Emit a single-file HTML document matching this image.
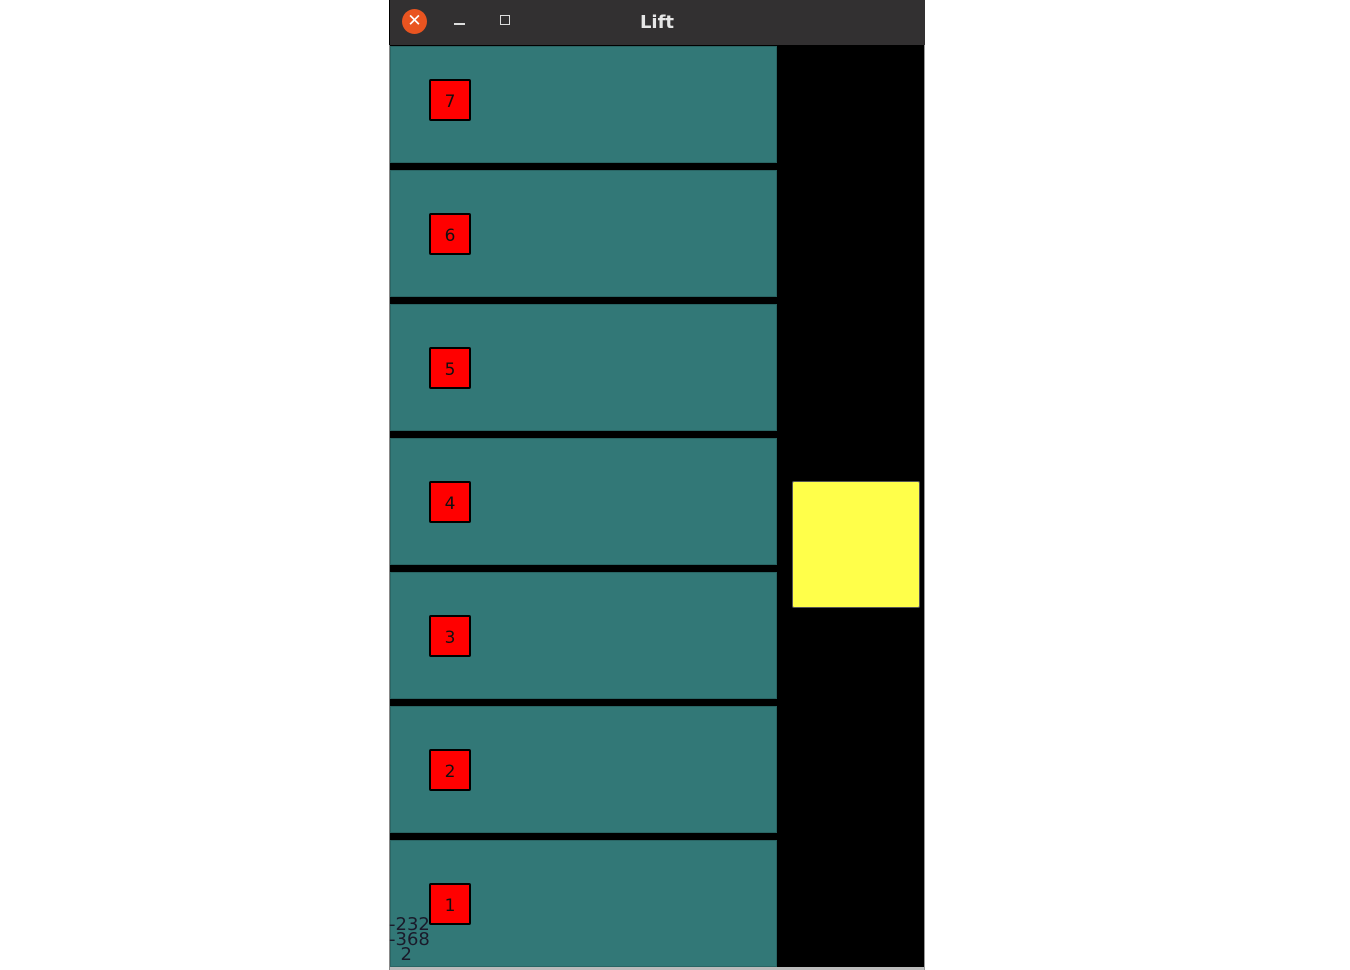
<!DOCTYPE html>
<html><head><style>
body{margin:0;width:1350px;height:970px;background:#fff;position:relative;overflow:hidden;font-family:"Liberation Sans",sans-serif}
.a{position:absolute}
.fl{position:absolute;left:390px;width:387px;background:#327877;box-shadow:inset 0 0 0 1px #2a6564}
.b{position:absolute;left:429px;width:38px;height:38px;background:#ff0000;border:2px solid #000;border-radius:2px;font-size:17px;line-height:42px;text-align:center;color:#111;font-family:"DejaVu Sans",sans-serif}
</style></head><body>
<div class="a" style="left:389px;top:0;width:536px;height:970px;background:#000"></div>
<div class="a" style="left:389px;top:45px;width:1px;height:925px;background:#888"></div>
<div class="a" style="left:390px;top:0;width:535px;height:45px;background:#323031"></div>
<div class="a" style="left:402px;top:9px;width:25px;height:25px;border-radius:50%;background:#e95420;color:#fff;font-size:17px;line-height:25px;text-align:center;font-family:'DejaVu Sans',sans-serif">✕</div>
<div class="a" style="left:454px;top:23px;width:11px;height:1.5px;background:#ddd"></div>
<div class="a" style="left:500px;top:15px;width:8px;height:8px;border:1.5px solid #ddd"></div>
<div class="a" style="left:600px;top:12px;width:114px;text-align:center;color:#e6e6e6;font-weight:bold;font-size:18px;font-family:'DejaVu Sans',sans-serif">Lift</div>
<div class="fl" style="top:46px;height:117px"></div>
<div class="fl" style="top:170px;height:127px"></div>
<div class="fl" style="top:304px;height:127px"></div>
<div class="fl" style="top:438px;height:127px"></div>
<div class="fl" style="top:572px;height:127px"></div>
<div class="fl" style="top:706px;height:127px"></div>
<div class="fl" style="top:840px;height:127px"></div>
<div class="b" style="top:79px">7</div>
<div class="b" style="top:213px">6</div>
<div class="b" style="top:347px">5</div>
<div class="b" style="top:481px">4</div>
<div class="b" style="top:615px">3</div>
<div class="b" style="top:749px">2</div>
<div class="b" style="top:883px">1</div>
<div class="a" style="left:792px;top:481px;width:126px;height:125px;background:#ffff4a;border:1px solid #555;border-radius:2px"></div>
<div class="a" style="left:390px;top:967px;width:535px;height:3px;background:#bbb"></div>
<div class="a" style="left:924px;top:45px;width:1px;height:925px;background:#999"></div>
<div class="a" style="left:389px;top:917px;font-size:18px;line-height:15px;color:#1a1a2a;font-family:'DejaVu Sans',sans-serif">-232<br>-368<br>&nbsp;&nbsp;2</div>
</body></html>
